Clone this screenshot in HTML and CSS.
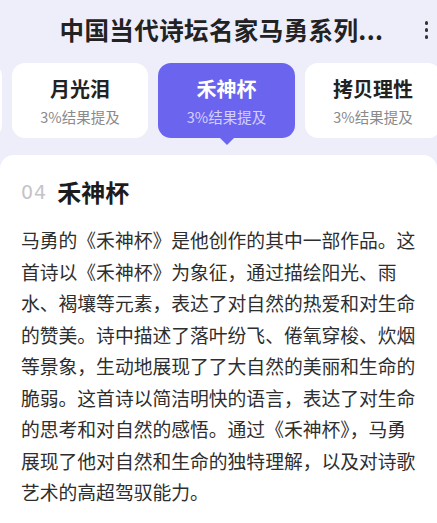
FILE: index.html
```html
<!DOCTYPE html>
<html lang="zh-CN">
<head>
<meta charset="utf-8">
<link rel="stylesheet" href="styles.css">
</head>
<body>
<div class="page">
  <header class="topbar">
    <div class="spacer"></div>
    <h1 class="title">中国当代诗坛名家马勇系列...</h1>
    <div class="more" aria-label="更多"><span></span><span></span><span></span></div>
  </header>
  <nav class="tabs">
    <div class="tab" aria-hidden="true"></div>
    <div class="tab"><div class="tab-name">月光泪</div><div class="tab-sub">3%结果提及</div></div>
    <div class="tab active"><div class="tab-name">禾神杯</div><div class="tab-sub">3%结果提及</div></div>
    <div class="tab"><div class="tab-name">拷贝理性</div><div class="tab-sub">3%结果提及</div></div>
  </nav>
  <main class="card">
    <h2 class="heading"><span class="num">04</span><span class="name">禾神杯</span></h2>
    <p class="body">马勇的《禾神杯》是他创作的其中一部作品。这<br>首诗以《禾神杯》为象征，通过描绘阳光、雨<br>水、褐壤等元素，表达了对自然的热爱和对生命<br>的赞美。诗中描述了落叶纷飞、倦氧穿梭、炊烟<br>等景象，生动地展现了了大自然的美丽和生命的<br>脆弱。这首诗以简洁明快的语言，表达了对生命<br>的思考和对自然的感悟。通过《禾神杯》，马勇<br>展现了他对自然和生命的独特理解，以及对诗歌<br>艺术的高超驾驭能力。</p>
  </main>
</div>
</body>
</html>
```

FILE: styles.css
```css
html, body {
  margin: 0;
  padding: 0;
}
body {
  background: #eeeefb;
  font-family: "Noto Sans CJK SC", "Noto Sans", sans-serif;
  color: #222;
  width: 437px;
  height: 523px;
  overflow: hidden;
}
.page {
  display: flex;
  flex-direction: column;
  height: 523px;
}
.topbar {
  display: grid;
  grid-template-columns: 1fr auto 1fr;
  align-items: center;
  height: 60px;
}
.title {
  margin: 0;
  font-size: 24.5px;
  font-weight: 700;
  letter-spacing: 0.4px;
  line-height: 32px;
  color: #222;
  padding-left: 6px;
}
.more {
  justify-self: end;
  display: flex;
  flex-direction: column;
  gap: 3.5px;
  padding-right: 9px;
}
.more span {
  display: block;
  width: 3.5px;
  height: 3.5px;
  border-radius: 50%;
  background: #333;
}
.tabs {
  display: flex;
  gap: 10px;
  margin-top: 3px;
  margin-left: -134px;
  height: 75px;
}
.tab {
  position: relative;
  flex: 0 0 136px;
  height: 75px;
  background: #ffffff;
  border-radius: 13px;
  display: flex;
  flex-direction: column;
  align-items: center;
  justify-content: center;
  gap: 4px;
}
.tab-name {
  font-size: 20px;
  font-weight: 700;
  line-height: 28px;
  color: #222;
}
.tab-sub {
  font-size: 14.5px;
  line-height: 20px;
  color: #8a8a8a;
}
.tab.active {
  background: #6b64ef;
  flex-basis: 137px;
}
.tab.active .tab-name {
  color: #ffffff;
}
.tab.active .tab-sub {
  color: #d3d0ff;
}
.tab.active::after {
  content: "";
  position: absolute;
  left: 50%;
  bottom: -7px;
  margin-left: -7px;
  width: 0;
  height: 0;
  border-left: 7px solid transparent;
  border-right: 7px solid transparent;
  border-top: 7px solid #6b64ef;
}
.card {
  flex: 1;
  margin-top: 17px;
  background: #ffffff;
  border-radius: 14px 14px 0 0;
  padding: 21px 20px 0 21px;
}
.heading {
  margin: 0;
  display: flex;
  align-items: center;
  gap: 10px;
  line-height: 32px;
}
.num {
  font-family: "DejaVu Sans", sans-serif;
  font-size: 19px;
  font-weight: 400;
  color: #c4c4c6;
  letter-spacing: 1px;
}
.name {
  font-size: 24px;
  font-weight: 700;
  color: #1c1c1c;
}
.body {
  margin: 16px 0 0;
  font-size: 18.8px;
  line-height: 31.5px;
  color: #2e2e2e;
  white-space: nowrap;
}
```
